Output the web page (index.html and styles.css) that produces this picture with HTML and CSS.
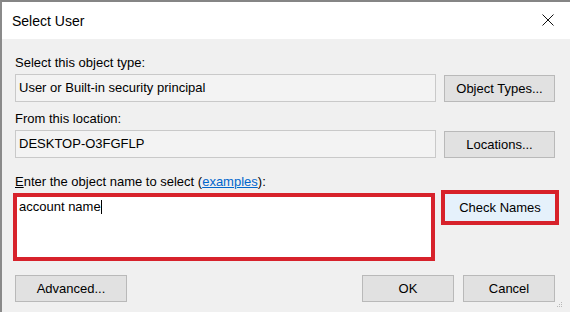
FILE: index.html
```html
<!DOCTYPE html>
<html>
<head>
<meta charset="utf-8">
<title>Select User</title>
<link rel="stylesheet" href="styles.css">
</head>
<body>
<div class="window">
  <div class="titlebar">
    <span class="title">Select User</span>
    <svg class="close" width="12" height="12" viewBox="0 0 12 12"><path d="M0.5 0.5 L11.5 11.5 M11.5 0.5 L0.5 11.5" stroke="#111" stroke-width="1" fill="none"/></svg>
  </div>
  <div class="content">
    <div class="label first">Select this object type:</div>
    <div class="row">
      <div class="field">User or Built-in security principal</div>
      <div class="btn">Object Types...</div>
    </div>
    <div class="label second">From this location:</div>
    <div class="row">
      <div class="field">DESKTOP-O3FGFLP</div>
      <div class="btn">Locations...</div>
    </div>
    <div class="label third"><span class="u">E</span>nter the object name to select (<span class="link">examples</span>):</div>
    <div class="row names">
      <div class="namebox">account name<span class="caret"></span></div>
      <div class="btn check">Check Names</div>
    </div>
    <div class="row bottom">
      <div class="btn adv">Advanced...</div>
      <div class="spacer"></div>
      <div class="btn small">OK</div>
      <div class="btn small">Cancel</div>
    </div>
  </div>
  <svg class="grip" width="6" height="6" viewBox="0 0 6 6"><rect x="4" y="0" width="1" height="1" fill="#b8b8b8"/><rect x="2" y="2" width="1" height="1" fill="#b8b8b8"/><rect x="4" y="2" width="1" height="1" fill="#b8b8b8"/><rect x="0" y="4" width="1" height="1" fill="#b8b8b8"/><rect x="2" y="4" width="1" height="1" fill="#b8b8b8"/><rect x="4" y="4" width="1" height="1" fill="#b8b8b8"/></svg>
</div>
</body>
</html>
```

FILE: styles.css
```css
html, body {
  margin: 0;
  padding: 0;
  background: #f0f0f0;
}
body {
  font-family: "Liberation Sans", Arial, sans-serif;
  color: #000;
}
.window {
  position: relative;
  width: 570px;
  height: 312px;
  box-sizing: border-box;
  border-top: 2px solid #858585;
  border-left: 2px solid #8a8a8a;
  background: #f0f0f0;
  overflow: hidden;
}
.titlebar {
  height: 37px;
  background: #fff;
  display: flex;
  align-items: center;
  justify-content: space-between;
  padding: 0 16px 0 10px;
}
.title {
  font-size: 14px;
  line-height: 16px;
  color: #000;
}
.close {
  display: block;
  margin-top: -1px;
}
.content {
  display: flex;
  flex-direction: column;
  padding: 0 15px 0 13px;
  font-size: 13px;
  line-height: 16px;
}
.label {
  height: 16px;
  margin-bottom: 3px;
}
.label.first { margin-top: 16px; }
.label.second { margin-top: 9px; }
.label.third { margin-top: 16px; margin-bottom: 0; }
.u { text-decoration: underline; }
.link {
  color: #0066cc;
  text-decoration: underline;
}
.row {
  display: flex;
  align-items: flex-end;
  gap: 8px;
}
.field {
  width: 421px;
  height: 28px;
  box-sizing: border-box;
  border: 1px solid #c9c9c9;
  background: #f3f3f3;
  padding: 0 3px;
  line-height: 26px;
  white-space: nowrap;
}
.btn {
  width: 111px;
  height: 27px;
  box-sizing: border-box;
  border: 1px solid #b9b9b9;
  background: #e1e1e1;
  text-align: center;
  line-height: 25px;
  white-space: nowrap;
}
.row.names {
  align-items: flex-start;
  gap: 0;
}
.namebox {
  width: 414px;
  height: 60px;
  margin: 7px 0 0 2px;
  box-sizing: border-box;
  background: #fff;
  outline: 4px solid #d7222b;
  padding: 2px 0 0 2px;
  line-height: 16px;
}
.caret {
  display: inline-block;
  width: 1px;
  height: 14px;
  background: #000;
  vertical-align: -3px;
}
.btn.check {
  width: 110px;
  margin: 4px 0 0 14px;
  background: #e5f1fb;
  border-color: #e5f1fb;
  outline: 4px solid #d7222b;
}
.row.bottom {
  margin-top: 18px;
  gap: 9px;
}
.btn.adv { width: 112px; }
.btn.small { width: 92px; }
.spacer { flex: 1; }
.grip {
  position: absolute;
  right: 7px;
  bottom: 4px;
}
```
